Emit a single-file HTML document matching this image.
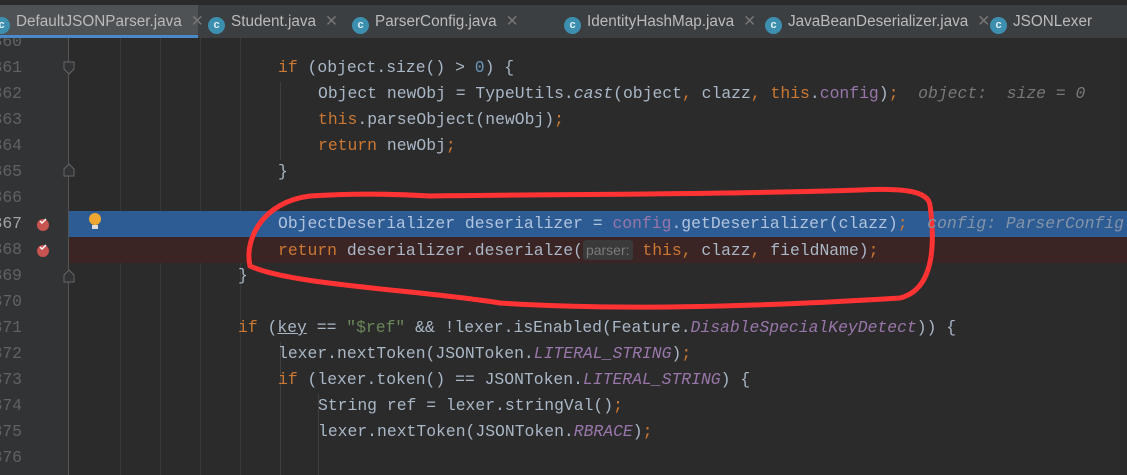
<!DOCTYPE html>
<html><head><meta charset="utf-8"><style>
body{margin:0;width:1127px;height:475px;overflow:hidden;background:#2b2b2b;position:relative;font-family:"Liberation Mono",monospace;}
.tabs{position:absolute;left:0;top:0;width:1127px;height:38px;background:#3c3f41;border-top:5px solid #2b2b2b;box-sizing:border-box;}
.tab{position:absolute;top:0;height:33px;font-family:"Liberation Sans",sans-serif;font-size:15.3px;color:#bbbbbb;line-height:34px;white-space:nowrap}
.tab i{display:inline-block;width:17px;height:17px;border-radius:50%;background:#3d8fb0;color:#e0f0f5;font-style:normal;font-size:11px;line-height:17px;text-align:center;vertical-align:-2px;margin-right:6px;font-weight:bold}
.tab b{font-weight:normal;color:#777;margin-left:9px}
.active{background:#4e5254;border-bottom:3px solid #4a88c7;height:30px}
.gut{position:absolute;left:0;top:38px;width:68px;height:437px;background:#313335;border-right:1px solid #555}
.ln{position:absolute;left:-10px;width:32px;text-align:right;color:#606366;font-size:16.4px;height:26px;line-height:26px}
.row{position:absolute;left:0;width:1127px;height:26px;line-height:26px;font-size:16.4px;color:#a9b7c6;white-space:pre}
.g{position:absolute;top:38px;width:1px;height:437px;background:#393939}
.k{color:#cc7832}.p{color:#9876aa}.it{font-style:italic}.s{color:#6a8759}.n{color:#6897bb}.cm{color:#787878;font-style:italic}
</style></head><body>
<div class="g" style="left:120px"></div><div class="g" style="left:160px"></div><div class="g" style="left:200px"></div><div class="g" style="left:240px"></div>
<div class="row" style="top:211px;left:69px;width:1058px;background:#2d5b93"></div>
<div class="row" style="top:237px;left:69px;width:1058px;background:#3b2424"></div>
<div class="g" style="left:280px;top:82px;height:78px;background:#3f3f3f"></div>
<div class="g" style="left:280px;top:342px;height:133px;background:#3f3f3f"></div>
<div class="g" style="left:318px;top:394px;height:81px;background:#3f3f3f"></div>
<div class="gut"></div>
<div class="ln" style="top:29px">360</div><div class="ln" style="top:55px">361</div><div class="ln" style="top:81px">362</div><div class="ln" style="top:107px">363</div><div class="ln" style="top:133px">364</div><div class="ln" style="top:159px">365</div><div class="ln" style="top:185px">366</div><div class="ln" style="top:211px;color:#a4a3a3">367</div><div class="ln" style="top:237px">368</div><div class="ln" style="top:263px">369</div><div class="ln" style="top:289px">370</div><div class="ln" style="top:315px">371</div><div class="ln" style="top:341px">372</div><div class="ln" style="top:367px">373</div><div class="ln" style="top:393px">374</div><div class="ln" style="top:419px">375</div><div class="ln" style="top:445px">376</div>
<div style="position:absolute;left:68px;top:38px;width:1px;height:437px;background:#555"></div>
<svg style="position:absolute;left:0;top:0" width="1127" height="475">
<path d="M64 62h10v7l-5 5l-5-5z M64 176h10v-7l-5-5l-5 5z M64 282h10v-7l-5-5l-5 5z" fill="#313335" stroke="#666"/>
<circle cx="43" cy="225" r="6" fill="#c75450"/><circle cx="43" cy="251" r="6" fill="#c75450"/>
<path d="M40 221l2 2l4-4M40 247l2 2l4-4" stroke="#fff" stroke-width="1.5" fill="none"/>
<circle cx="95" cy="219" r="6" fill="#f0a732"/><rect x="92" y="225" width="6" height="4" fill="#ddd"/>
<path d="M310 196C262 202 244 240 250 266C290 285 420 290 500 303C620 311 770 306 900 298C932 290 936 250 930 205C928 190 900 188 860 190C700 195 560 194 430 196C380 193 340 194 310 196Z" fill="none" stroke="#ff3333" stroke-width="5"/>
</svg>
<div class="tabs">
<div class="tab active" style="left:-7px;width:205px"><i>c</i>DefaultJSONParser.java<b>✕</b></div>
<div class="tab" style="left:208px"><i>c</i>Student.java<b>✕</b></div>
<div class="tab" style="left:352px"><i>c</i>ParserConfig.java<b>✕</b></div>
<div class="tab" style="left:564px"><i>c</i>IdentityHashMap.java<b>✕</b></div>
<div class="tab" style="left:765px"><i>c</i>JavaBeanDeserializer.java<b>✕</b></div>
<div class="tab" style="left:990px"><i>c</i>JSONLexer</div>
</div>
<div class="row" style="top:55px;left:278px"><span class="k">if</span> (object.size() &gt; <span class="n">0</span>) {</div>
<div class="row" style="top:81px;left:318px">Object newObj = TypeUtils.<span class="it">cast</span>(object<span class="k">,</span> clazz<span class="k">,</span> <span class="k">this</span>.<span class="p">config</span>)<span class="k">;</span>  <span class="cm">object:  size = 0</span></div>
<div class="row" style="top:107px;left:318px"><span class="k">this</span>.parseObject(newObj)<span class="k">;</span></div>
<div class="row" style="top:133px;left:318px"><span class="k">return</span> newObj<span class="k">;</span></div>
<div class="row" style="top:159px;left:278px">}</div>
<div class="row" style="top:211px;left:278px;color:#b0c4de">ObjectDeserializer deserializer = <span class="p">config</span>.getDeserializer(clazz)<span class="k">;</span>  <span class="cm" style="color:#8494a8">config: ParserConfig</span></div>
<div class="row" style="top:237px;left:278px"><span class="k">return</span> deserializer.deserialze(<span style="font-family:'Liberation Sans',sans-serif;font-size:14px;color:#7a7a7a;background:#3a3a3a;border-radius:3px;padding:2px 3px">parser:</span> <span class="k">this</span><span class="k">,</span> clazz<span class="k">,</span> fieldName)<span class="k">;</span></div>
<div class="row" style="top:263px;left:238px">}</div>
<div class="row" style="top:315px;left:238px"><span class="k">if</span> (<u>key</u> == <span class="s">"$ref"</span> &amp;&amp; !lexer.isEnabled(Feature.<span class="p it">DisableSpecialKeyDetect</span>)) {</div>
<div class="row" style="top:341px;left:278px">lexer.nextToken(JSONToken.<span class="p it">LITERAL_STRING</span>)<span class="k">;</span></div>
<div class="row" style="top:367px;left:278px"><span class="k">if</span> (lexer.token() == JSONToken.<span class="p it">LITERAL_STRING</span>) {</div>
<div class="row" style="top:393px;left:318px">String ref = lexer.stringVal()<span class="k">;</span></div>
<div class="row" style="top:419px;left:318px">lexer.nextToken(JSONToken.<span class="p it">RBRACE</span>)<span class="k">;</span></div>
</body></html>
